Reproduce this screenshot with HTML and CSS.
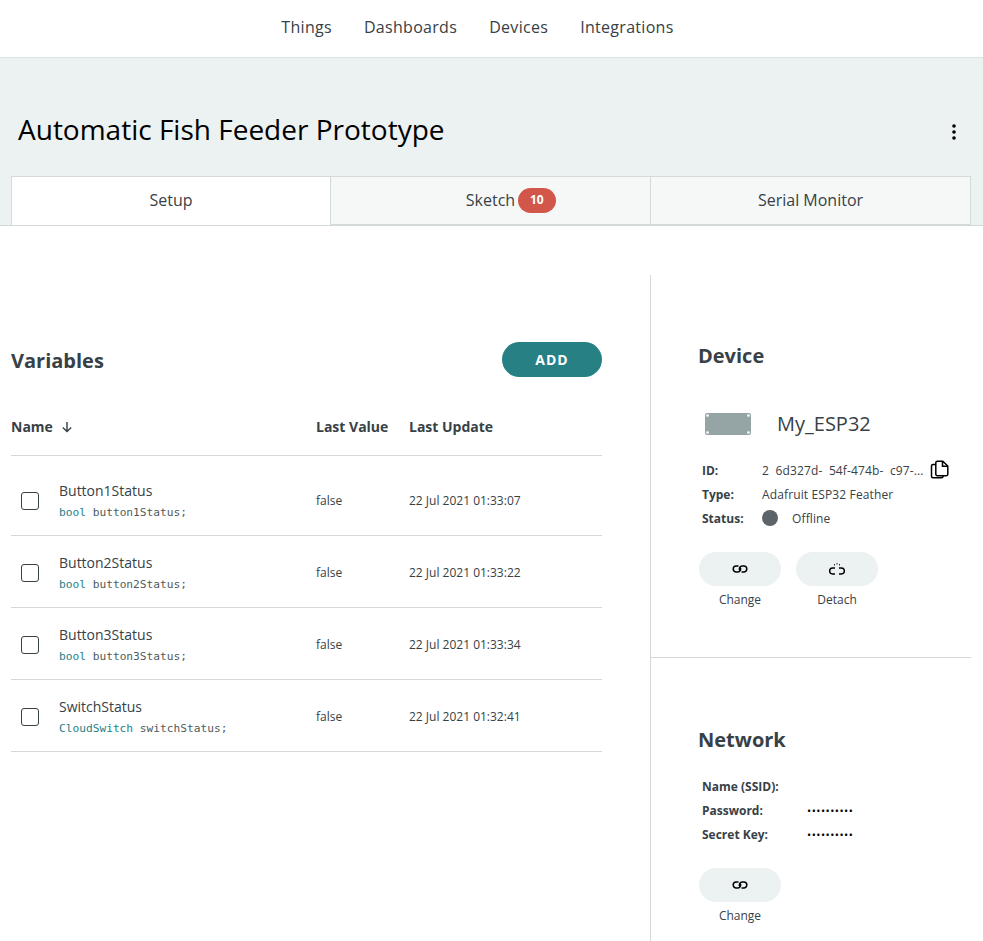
FILE: index.html
```html
<!DOCTYPE html>
<html lang="en">
<head>
<meta charset="utf-8">
<title>Automatic Fish Feeder Prototype</title>
<link rel="stylesheet" href="styles.css">
</head>
<body>
<svg class="defs" width="0" height="0" aria-hidden="true">
  <symbol id="link" viewBox="0 0 16 8">
    <path d="M6.5 1H4.2a3 3 0 0 0 0 6h1.6a3 3 0 0 0 2.4-4.6" fill="none" stroke="currentColor" stroke-width="1.5"/>
    <path d="M9.5 7h2.3a3 3 0 0 0 0-6h-1.6a3 3 0 0 0-2.4 4.6" fill="none" stroke="currentColor" stroke-width="1.5"/>
  </symbol>
</svg>
<nav class="topnav">
  <a>Things</a><a>Dashboards</a><a>Devices</a><a>Integrations</a>
</nav>
<header class="head">
  <div class="title-row">
    <h1>Automatic Fish Feeder Prototype</h1>
    <svg class="kebab" width="4" height="16" viewBox="0 0 4 16"><circle cx="2" cy="2" r="1.8"/><circle cx="2" cy="8" r="1.8"/><circle cx="2" cy="14" r="1.8"/></svg>
  </div>
  <div class="tabs">
    <div class="tab active">Setup</div>
    <div class="tab"><span class="tab-label">Sketch<span class="badge">10</span></span></div>
    <div class="tab">Serial Monitor</div>
  </div>
</header>
<main class="content">
  <section class="vars">
    <div class="vars-head">
      <h2>Variables</h2>
      <button class="add">ADD</button>
    </div>
    <div class="row thead">
      <div class="c-name">Name <svg class="arrow" width="12" height="12" viewBox="0 0 12 12"><path d="M6 1v9.5M1.8 6.5 6 10.5l4.2-4" fill="none" stroke="currentColor" stroke-width="1.4"/></svg></div>
      <div class="c-val">Last Value</div>
      <div class="c-upd">Last Update</div>
    </div>
    <div class="row item first">
      <span class="check"></span>
      <div class="c-name"><div class="vname">Button1Status</div><code><b>bool</b> button1Status;</code></div>
      <div class="c-val">false</div><div class="c-upd">22 Jul 2021 01:33:07</div>
    </div>
    <div class="row item">
      <span class="check"></span>
      <div class="c-name"><div class="vname">Button2Status</div><code><b>bool</b> button2Status;</code></div>
      <div class="c-val">false</div><div class="c-upd">22 Jul 2021 01:33:22</div>
    </div>
    <div class="row item">
      <span class="check"></span>
      <div class="c-name"><div class="vname">Button3Status</div><code><b>bool</b> button3Status;</code></div>
      <div class="c-val">false</div><div class="c-upd">22 Jul 2021 01:33:34</div>
    </div>
    <div class="row item">
      <span class="check"></span>
      <div class="c-name"><div class="vname">SwitchStatus</div><code><b>CloudSwitch</b> switchStatus;</code></div>
      <div class="c-val">false</div><div class="c-upd">22 Jul 2021 01:32:41</div>
    </div>
  </section>
  <aside class="side">
    <section class="device">
      <h2>Device</h2>
      <div class="dev-name">
        <svg class="board" width="46" height="22" viewBox="0 0 46 22"><rect x="0" y="0" width="46" height="22" rx="2" fill="#95a5a6"/><circle cx="2.5" cy="2.5" r="1.3" fill="#fff"/><circle cx="43.5" cy="2.5" r="1.3" fill="#fff"/><circle cx="2.5" cy="19.5" r="1.3" fill="#fff"/><circle cx="43.5" cy="19.5" r="1.3" fill="#fff"/></svg>
        <span>My_ESP32</span>
      </div>
      <dl class="info">
        <dt>ID:</dt>
        <dd class="id">2&nbsp; 6d327d-&nbsp; 54f-474b-&nbsp; c97-...<svg class="copy" width="19" height="19" viewBox="0 0 19 19"><path d="M9 1.2h3.8L17.8 6v8.2a1.5 1.5 0 0 1-1.5 1.5H7.3a1.5 1.5 0 0 1-1.5-1.5V2.7A1.5 1.5 0 0 1 7.3 1.2H9M12.5 1.5v4.8h5" fill="none" stroke="#000" stroke-width="1.5"/><path d="M5.8 4.4H3a1.5 1.5 0 0 0-1.5 1.5v10.3A1.5 1.5 0 0 0 3 17.7h8.5a1.5 1.5 0 0 0 1.5-1.5v-.5" fill="none" stroke="#000" stroke-width="1.5"/></svg></dd>
        <dt>Type:</dt>
        <dd>Adafruit ESP32 Feather</dd>
        <dt>Status:</dt>
        <dd class="status"><span class="dot"></span>Offline</dd>
      </dl>
      <div class="actions">
        <div class="action"><button class="pill"><svg width="16" height="8"><use href="#link"/></svg></button><span>Change</span></div>
        <div class="action"><button class="pill"><svg width="16" height="13" viewBox="0 0 16 13"><path d="M6 5H3.6a3 3 0 0 0 0 6H6M10 5h2.4a3 3 0 0 1 0 6H10" fill="none" stroke="currentColor" stroke-width="1.5"/><path d="M5.5 1.2v1.2M8 .2v1.2M10.5 1.2v1.2" stroke="currentColor" stroke-width="1" fill="none"/></svg></button><span>Detach</span></div>
      </div>
    </section>
    <section class="network">
      <h2>Network</h2>
      <dl class="info net">
        <dt>Name (SSID):</dt><dd></dd>
        <dt>Password:</dt><dd class="secret">••••••••••</dd>
        <dt>Secret Key:</dt><dd class="secret">••••••••••</dd>
      </dl>
      <div class="actions">
        <div class="action"><button class="pill"><svg width="16" height="8"><use href="#link"/></svg></button><span>Change</span></div>
      </div>
    </section>
  </aside>
</main>
</body>
</html>
```
FILE: styles.css
```css
* { box-sizing: border-box; }
html, body { margin: 0; padding: 0; }
body {
  width: 983px;
  height: 941px;
  overflow: hidden;
  background: #fff;
  font-family: "Open Sans", sans-serif;
  color: #374146;
}
.defs { position: absolute; }
.topnav {
  height: 58px;
  display: flex;
  justify-content: center;
  align-items: center;
  gap: 32px;
  padding-bottom: 3px;
  padding-right: 28px;
  font-size: 16px;
  letter-spacing: .3px;
  border-bottom: 1px solid #dae3e3;
}
.head {
  height: 168px;
  background: #ecf1f1;
  display: flex;
  flex-direction: column;
  border-bottom: 1px solid #d3dad9;
}
.title-row {
  flex: none;
  height: 118px;
  padding: 48px 27px 0 18px;
  display: flex;
  justify-content: space-between;
  align-items: flex-start;
}
h1 {
  margin: 0;
  font-size: 28px;
  line-height: 46px;
  font-weight: 400;
  color: #000;
}
.kebab { margin-top: 18px; fill: #000; }
.tabs {
  flex: none;
  display: flex;
  margin: 0 12px 0 11px;
  height: 49px;
}
.tab {
  width: 320px;
  height: 49px;
  display: flex;
  align-items: center;
  justify-content: center;
  font-size: 16px;
  background: #f6f8f8;
  border: 1px solid #d3dad9;
  border-left: 0;
  padding-bottom: 2px;
}
.tab.active {
  background: #fff;
  border-left: 1px solid #d3dad9;
  border-bottom: 0;
}
.tab-label { position: relative; }
.badge {
  position: absolute;
  left: 52px;
  top: -1px;
  width: 38px;
  height: 25px;
  line-height: 24px;
  border-radius: 13px;
  background: #d2574a;
  color: #fff;
  font-size: 12px;
  font-weight: 700;
  text-align: center;
}
.content {
  display: flex;
  padding: 49px 12px 0 11px;
}
h2 {
  margin: 0;
  font-size: 20px;
  line-height: 28px;
  font-weight: 700;
}
.vars { width: 591px; padding-top: 67px; }
.vars-head {
  display: flex;
  justify-content: space-between;
  align-items: center;
  height: 35px;
  margin-bottom: 21px;
}
.vars-head h2 { padding-top: 2px; }
.add {
  width: 100px;
  height: 35px;
  border: 0;
  border-radius: 18px;
  background: #268084;
  color: #fff;
  font: 700 14px "Open Sans", sans-serif;
  letter-spacing: 1px;
}
.row {
  display: flex;
  align-items: center;
  border-bottom: 1px solid #d3d8d8;
}
.thead {
  height: 58px;
  font-size: 14px;
  font-weight: 700;
}
.thead .c-name { width: 305px; display: flex; align-items: center; gap: 8px; }
.arrow { color: #374146; }
.c-val { width: 93px; flex: none; }
.c-upd { flex: none; }
.item {
  height: 72px;
  font-size: 12px;
  padding: 2px 0 0 10px;
}
.item.first { height: 80px; padding-top: 10px; }
.check {
  width: 18px;
  height: 18px;
  flex: none;
  border: 1.5px solid #374146;
  border-radius: 3px;
  margin-right: 20px;
}
.item .c-name { width: 257px; flex: none; }
.vname { font-size: 14px; line-height: 20px; }
code {
  display: block;
  margin: 4px 0 -1px;
  font-family: "DejaVu Sans Mono", monospace;
  font-size: 11.2px;
  line-height: 16px;
  color: #4e5b61;
}
code b { font-weight: 400; color: #268084; }
.side {
  width: 321px;
  margin-left: 48px;
  border-left: 1px solid #d3d8d8;
  height: 666px;
}
.device {
  height: 383px;
  padding: 67px 0 0 48px;
  border-bottom: 1px solid #d3d8d8;
}
.dev-name {
  display: flex;
  align-items: center;
  margin: 35px 0 0 6px;
  height: 36px;
  font-size: 20px;
  color: #374146;
}
.dev-name span { margin-left: 26px; }
.board { margin-top: 2px; }
.info {
  margin: 17px 0 0 3px;
  display: grid;
  grid-template-columns: 60px 1fr;
  grid-auto-rows: 24px;
  align-items: center;
  font-size: 12px;
}
.info dt { font-weight: 700; }
.info dd { margin: 0; letter-spacing: .13px; }
.id { display: flex; align-items: center; white-space: nowrap; }
.copy { margin-left: 6px; margin-top: -2px; }
.status { display: flex; align-items: center; }
.dot {
  width: 16px;
  height: 16px;
  border-radius: 50%;
  background: #5c6469;
  margin-right: 14px;
}
.actions { display: flex; gap: 15px; margin-top: 22px; }
.action {
  width: 82px;
  display: flex;
  flex-direction: column;
  align-items: center;
  font-size: 12px;
}
.action span { margin-top: 5px; line-height: 17px; }
.pill {
  width: 82px;
  height: 34px;
  border: 0;
  border-radius: 17px;
  background: #ecf1f1;
  color: #000;
  display: flex;
  align-items: center;
  justify-content: center;
  padding: 0;
}
.network { padding: 68px 0 0 48px; }
.side h2 { margin-left: -1px; }
.info.net {
  margin-top: 20px;
  grid-template-columns: 105px 1fr;
}
.info .secret { color: #000; font-size: 11px; letter-spacing: .5px; }
```
